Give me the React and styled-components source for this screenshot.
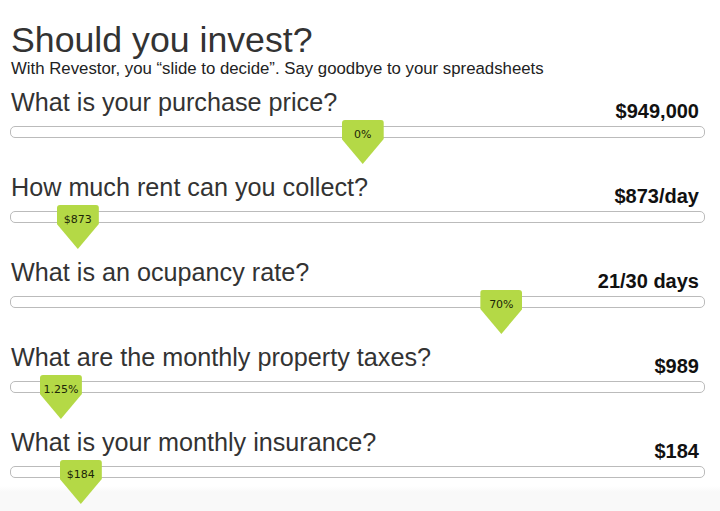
import React from "react";
import styled, { createGlobalStyle } from "styled-components";

const Global = createGlobalStyle`
  html, body { margin: 0; padding: 0; }
  body {
    font-family: "Liberation Sans", Arial, Helvetica, sans-serif;
    color: #333;
    min-height: 511px;
    background: linear-gradient(to bottom, #ffffff 0, #ffffff 486px, #f9f9f9 492px, #f9f9f9 100%);
  }
`;

const Page = styled.main`
  width: 695px;
  padding: 20px 0 0 10px;
  display: flex;
  flex-direction: column;
`;

const Title = styled.h1`
  margin: 0 0 0 1px;
  font-size: 35.7px;
  line-height: 40px;
  font-weight: normal;
  color: #333;
`;

const Subtitle = styled.p`
  margin: 0 0 10px 1px;
  font-size: 16.8px;
  line-height: 18px;
  color: #222;
`;

const Section = styled.section`
  display: flex;
  flex-direction: column;
  margin-bottom: 35px;
`;

const Header = styled.div`
  display: flex;
  justify-content: space-between;
  align-items: flex-end;
  margin-bottom: 5px;
`;

const Question = styled.h2`
  margin: 0 0 5px 1px;
  font-size: 25.2px;
  line-height: 28px;
  font-weight: normal;
  color: #333;
`;

const Value = styled.div`
  font-size: 20px;
  line-height: 20px;
  font-weight: bold;
  color: #111;
  padding-right: 6px;
`;

const Track = styled.div`
  position: relative;
  height: 10px;
  border: 1px solid #bbbbbb;
  border-radius: 5px;
  background: #fff;
`;

const Thumb = styled.div`
  position: absolute;
  top: -7px;
  width: 42px;
  height: 44px;
  background: #b4d946;
  border-radius: 3px 3px 0 0;
  clip-path: polygon(0 0, 100% 0, 100% 19px, 50% 100%, 0 19px);
  display: flex;
  justify-content: center;
  box-sizing: border-box;
  padding-top: 9px;
`;

const ThumbLabel = styled.span`
  font-family: "DejaVu Sans", Verdana, sans-serif;
  font-size: 11px;
  line-height: 12px;
  color: #1c2608;
`;

const items = [
  { q: "What is your purchase price?", v: "$949,000", label: "0%", pos: 0.508 },
  { q: "How much rent can you collect?", v: "$873/day", label: "$873", pos: 0.0704 },
  { q: "What is an ocupancy rate?", v: "21/30 days", label: "70%", pos: 0.721 },
  { q: "What are the monthly property taxes?", v: "$989", label: "1.25%", pos: 0.0444 },
  { q: "What is your monthly insurance?", v: "$184", label: "$184", pos: 0.075 },
];

export default function App() {
  return (
    <>
      <Global />
      <Page>
        <Title>Should you invest?</Title>
        <Subtitle>With Revestor, you “slide to decide”. Say goodbye to your spreadsheets</Subtitle>
        {items.map((it) => (
          <Section key={it.q}>
            <Header>
              <Question>{it.q}</Question>
              <Value>{it.v}</Value>
            </Header>
            <Track>
              <Thumb style={{ left: `calc(${it.pos} * (100% - 42px))` }}>
                <ThumbLabel>{it.label}</ThumbLabel>
              </Thumb>
            </Track>
          </Section>
        ))}
      </Page>
    </>
  );
}
